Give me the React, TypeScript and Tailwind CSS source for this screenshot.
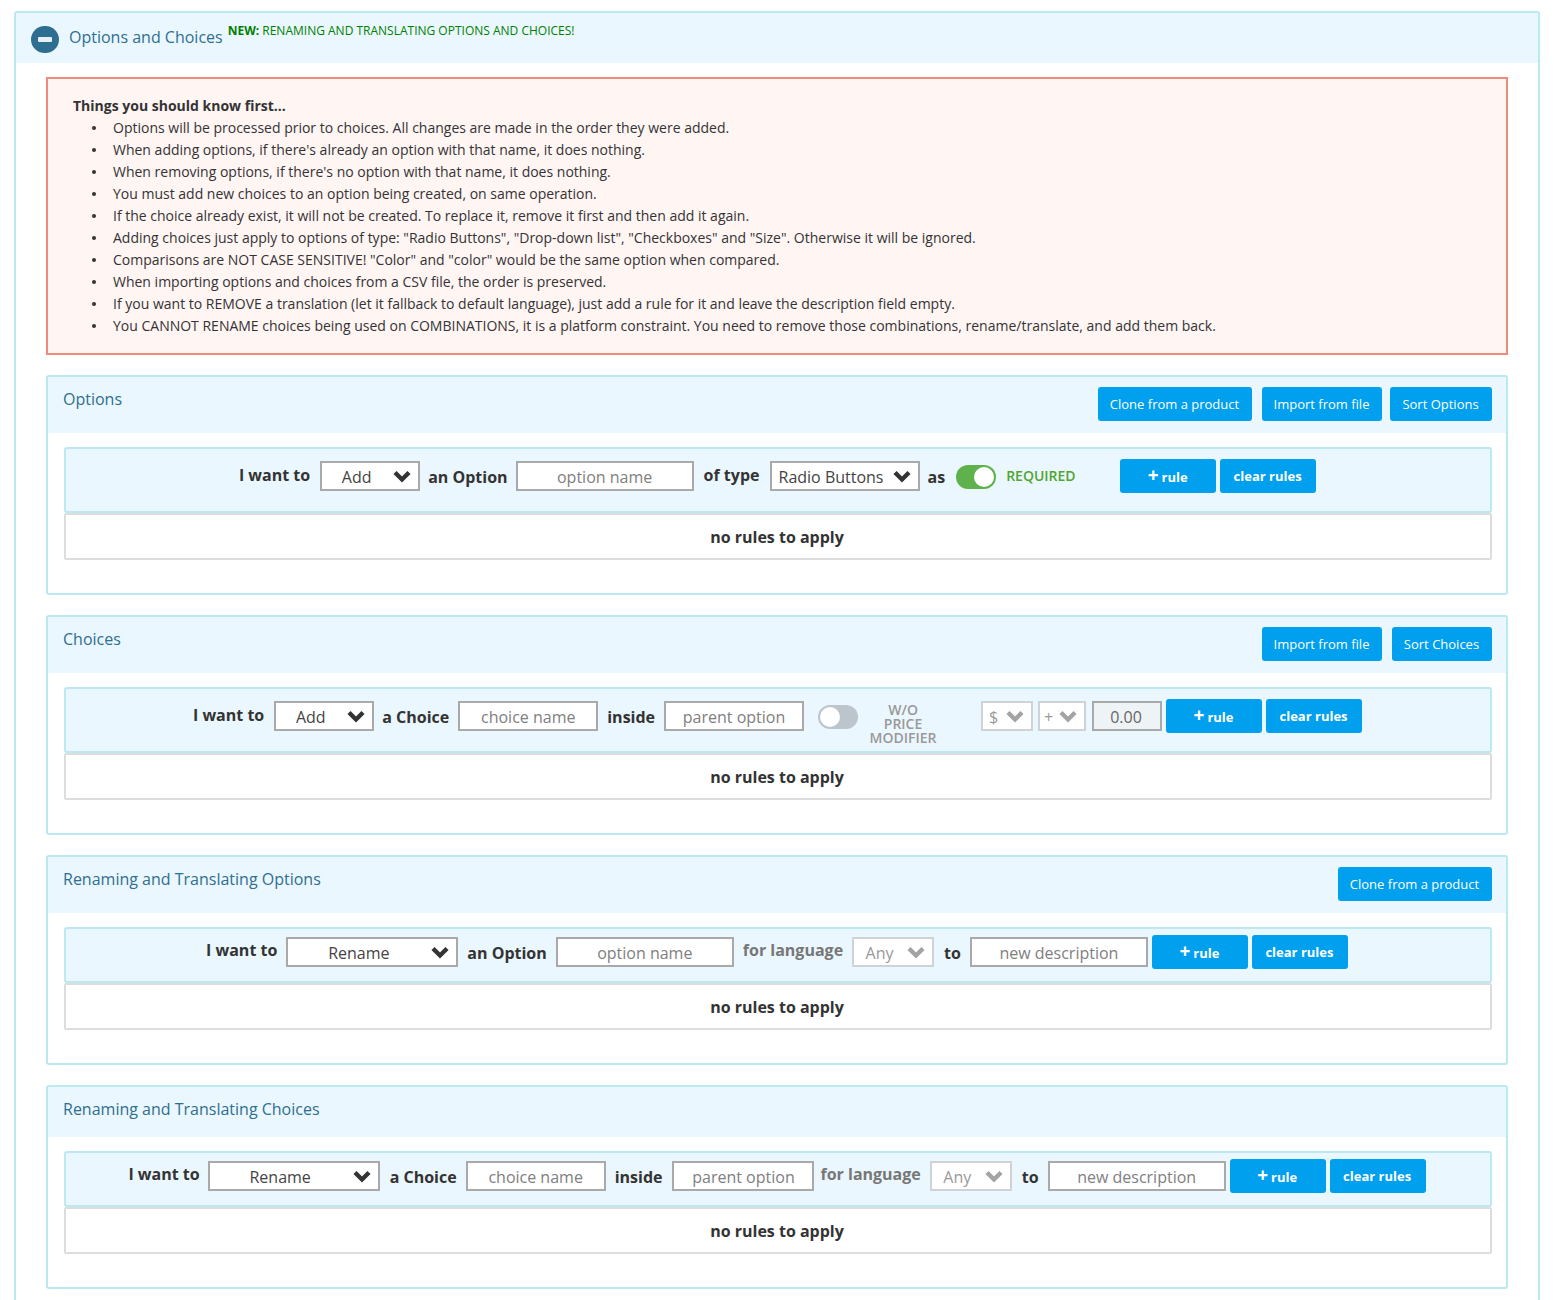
import React, { ReactNode } from "react";

const notes = [
  "Options will be processed prior to choices. All changes are made in the order they were added.",
  "When adding options, if there's already an option with that name, it does nothing.",
  "When removing options, if there's no option with that name, it does nothing.",
  "You must add new choices to an option being created, on same operation.",
  "If the choice already exist, it will not be created. To replace it, remove it first and then add it again.",
  'Adding choices just apply to options of type: "Radio Buttons", "Drop-down list", "Checkboxes" and "Size". Otherwise it will be ignored.',
  'Comparisons are NOT CASE SENSITIVE! "Color" and "color" would be the same option when compared.',
  "When importing options and choices from a CSV file, the order is preserved.",
  "If you want to REMOVE a translation (let it fallback to default language), just add a rule for it and leave the description field empty.",
  "You CANNOT RENAME choices being used on COMBINATIONS, it is a platform constraint. You need to remove those combinations, rename/translate, and add them back.",
];

const Label = ({ children, className = "" }: { children: ReactNode; className?: string }) => (
  <span className={`text-[16px] leading-[22px] font-bold whitespace-nowrap ${className}`}>{children}</span>
);

const Chevron = ({ disabled = false }: { disabled?: boolean }) => (
  <svg viewBox="0 0 20 14" className={`mr-[6px] h-[14px] w-5 shrink-0 ${disabled ? "text-[#a3a3a3]" : "text-[#333]"}`}>
    <polyline points="3,3.5 10,10.5 17,3.5" fill="none" stroke="currentColor" strokeWidth="4.4" />
  </svg>
);

const Select = ({ value, className = "", disabled = false }: { value: string; className?: string; disabled?: boolean }) => (
  <div
    className={`flex h-[30px] items-center border-2 bg-white text-[16px] ${
      disabled ? "border-[#d0d3d5] text-[#999]" : "border-[#a9a9a9] text-[#444]"
    } ${className}`}
  >
    <span className="flex-1 pt-[2px] pr-[1px] text-center whitespace-nowrap">{value}</span>
    <Chevron disabled={disabled} />
  </div>
);

const Field = ({ placeholder, className = "" }: { placeholder: string; className?: string }) => (
  <input
    placeholder={placeholder}
    className={`h-[30px] border-2 border-[#a9a9a9] bg-white pt-[2px] text-center text-[16px] outline-none placeholder:text-[#808080] ${className}`}
  />
);

const Btn = ({ children, className = "" }: { children: ReactNode; className?: string }) => (
  <button className={`h-[34px] rounded-[3px] bg-[#00a0ee] pt-[2px] pr-[1px] text-[13px] whitespace-nowrap text-white ${className}`}>
    {children}
  </button>
);

const RuleButtons = ({ className = "" }: { className?: string }) => (
  <div className={`flex gap-1 ${className}`}>
    <Btn className="w-24 font-bold">
      <span className="mr-[3px] text-[19px] leading-none">+</span>rule
    </Btn>
    <Btn className="w-24 font-bold">clear rules</Btn>
  </div>
);

const Toggle = ({ on = false }: { on?: boolean }) => (
  <span
    className={`flex h-6 w-10 items-center rounded-full p-[2px] ${on ? "justify-end bg-[#5fb14c]" : "justify-start bg-[#bcc5cc]"}`}
  >
    <span className="h-5 w-5 rounded-full bg-white" />
  </span>
);

type SectionProps = {
  title: string;
  buttons?: ReactNode;
  headerClass: string;
  barClass: string;
  bottomClass: string;
  children: ReactNode;
};

const Section = ({ title, buttons, headerClass, barClass, bottomClass, children }: SectionProps) => (
  <section className={`overflow-hidden rounded-[3px] border-2 border-[#bce8f1] ${bottomClass}`}>
    <div className={`flex items-start justify-between bg-[#ebf7fe] pt-[10px] pr-[14px] pl-[15px] ${headerClass}`}>
      <h3 className="text-[16px] leading-[24px] text-[#2e6f91]">{title}</h3>
      {buttons}
    </div>
    <div className="mt-[14px] pr-[14px] pl-4">
      <div className={`flex justify-center rounded-[3px] border-2 border-[#bce8f1] bg-[#ebf7fe] ${barClass}`}>{children}</div>
      <div className="flex h-[47px] items-center justify-center rounded-[2px] border-2 border-[#ddd] bg-white pr-[2px] text-[16px] font-bold text-[#333]">
        no rules to apply
      </div>
    </div>
  </section>
);

export default function App() {
  return (
    <div className="h-[1300px] overflow-hidden bg-white pt-[11px] pr-[14px] pl-[14px] font-['Open_Sans',sans-serif] text-[#333]">
      <div className="rounded-t-[3px] border-2 border-b-0 border-[#bce8f1] pb-[40px]">
        <header className="flex h-[50px] bg-[#ebf7fe] pl-[15px]">
          <span className="mt-[13px] flex h-[27px] w-[28px] items-center justify-center rounded-full bg-[#2e6f91]">
            <span className="h-[5px] w-[14px] rounded-[1px] bg-[#e8f0f4]" />
          </span>
          <h2 className="mt-[12px] ml-[10px] text-[16px] leading-[24px] text-[#2e6f91]">Options and Choices</h2>
          <p className="mt-[9px] ml-[5px] text-[12px] leading-[18px] text-[#008000]">
            <b>NEW:</b> RENAMING AND TRANSLATING OPTIONS AND CHOICES!
          </p>
        </header>

        <div className="mx-[30px] mt-[14px] flex flex-col gap-[20px]">
          <div className="h-[278px] border-2 border-[#ee8a7a] bg-[#fff5f3] pt-4 pl-[25px] text-[14px] leading-[22px]">
            <b>Things you should know first...</b>
            <ul>
              {notes.map((n) => (
                <li key={n} className="flex">
                  <span className="mt-[9px] mr-[17px] ml-[19px] h-1 w-1 shrink-0 rounded-full bg-[#333]" />
                  <span>{n}</span>
                </li>
              ))}
            </ul>
          </div>

          <Section
            title="Options"
            headerClass="h-[56px]"
            barClass="h-[66px] pt-[10px] pr-[1px]"
            bottomClass="h-[220px]"
            buttons={
              <div className="flex">
                <Btn className="w-[154px]">Clone from a product</Btn>
                <Btn className="ml-[10px] w-[120px]">Import from file</Btn>
                <Btn className="ml-2 w-[102px]">Sort Options</Btn>
              </div>
            }
          >
            <Label className="mt-[5px]">I want to</Label>
            <Select value="Add" className="mt-[2px] ml-[10px] w-[100px]" />
            <Label className="mt-[7px] ml-2">an Option</Label>
            <Field placeholder="option name" className="mt-[2px] ml-2 w-[178px]" />
            <Label className="mt-[5px] ml-[10px]">of type</Label>
            <Select value="Radio Buttons" className="mt-[2px] ml-[10px] w-[150px]" />
            <Label className="mt-[7px] ml-2">as</Label>
            <span className="mt-[6px] ml-[11px]">
              <Toggle on />
            </span>
            <span className="mt-[6px] ml-[10px] w-[114px] text-[14px] leading-[22px] font-semibold text-[#4fa52f]">REQUIRED</span>
            <RuleButtons />
          </Section>

          <Section
            title="Choices"
            headerClass="h-[56px]"
            barClass="h-[66px] pt-[10px] pr-[1px]"
            bottomClass="h-[220px]"
            buttons={
              <div className="flex">
                <Btn className="w-[120px]">Import from file</Btn>
                <Btn className="ml-[10px] w-[100px]">Sort Choices</Btn>
              </div>
            }
          >
            <Label className="mt-[5px]">I want to</Label>
            <Select value="Add" className="mt-[2px] ml-[10px] w-[100px]" />
            <Label className="mt-[7px] ml-2">a Choice</Label>
            <Field placeholder="choice name" className="mt-[2px] ml-[9px] w-[140px]" />
            <Label className="mt-[7px] ml-[9px]">inside</Label>
            <Field placeholder="parent option" className="mt-[2px] ml-[9px] w-[140px]" />
            <span className="mt-[6px] ml-[14px]">
              <Toggle />
            </span>
            <span className="mt-[4px] ml-[11px] w-[68px] text-center text-[14px] leading-[14px] font-semibold text-[#999]">
              W/O PRICE MODIFIER
            </span>
            <Select value="$" disabled className="mt-[2px] ml-[44px] w-[52px]" />
            <Select value="+" disabled className="mt-[2px] ml-[5px] w-[48px]" />
            <input
              readOnly
              value="0.00"
              className="mt-[2px] ml-[6px] h-[30px] w-[70px] border-2 border-[#a9a9a9] bg-[#eef3f6] pt-[2px] pr-[2px] text-center text-[16px] text-[#666] outline-none"
            />
            <RuleButtons className="ml-1" />
          </Section>

          <Section
            title="Renaming and Translating Options"
            headerClass="h-[56px]"
            barClass="h-[56px] pt-2 pr-[2px]"
            bottomClass="h-[210px]"
            buttons={<Btn className="w-[154px]">Clone from a product</Btn>}
          >
            <Label className="mt-[2px]">I want to</Label>
            <Select value="Rename" className="ml-[9px] w-[172px]" />
            <Label className="mt-[5px] ml-[9px]">an Option</Label>
            <Field placeholder="option name" className="ml-[9px] w-[178px]" />
            <Label className="mt-[2px] ml-[9px] text-[#777]">for language</Label>
            <Select value="Any" disabled className="ml-[9px] w-[82px]" />
            <Label className="mt-[5px] ml-[10px]">to</Label>
            <Field placeholder="new description" className="ml-[9px] w-[178px]" />
            <RuleButtons className="mt-[-2px] ml-1" />
          </Section>

          <Section
            title="Renaming and Translating Choices"
            headerClass="h-[50px]"
            barClass="h-[56px] pt-2 pr-[2px]"
            bottomClass="h-[204px]"
          >
            <Label className="mt-[2px]">I want to</Label>
            <Select value="Rename" className="ml-2 w-[172px]" />
            <Label className="mt-[5px] ml-[10px]">a Choice</Label>
            <Field placeholder="choice name" className="ml-[9px] w-[140px]" />
            <Label className="mt-[5px] ml-[9px]">inside</Label>
            <Field placeholder="parent option" className="ml-[10px] w-[142px]" />
            <Label className="mt-[2px] ml-[6px] text-[#777]">for language</Label>
            <Select value="Any" disabled className="ml-[9px] w-[82px]" />
            <Label className="mt-[5px] ml-[10px]">to</Label>
            <Field placeholder="new description" className="ml-[9px] w-[178px]" />
            <RuleButtons className="mt-[-2px] ml-1" />
          </Section>
        </div>
      </div>
    </div>
  );
}
